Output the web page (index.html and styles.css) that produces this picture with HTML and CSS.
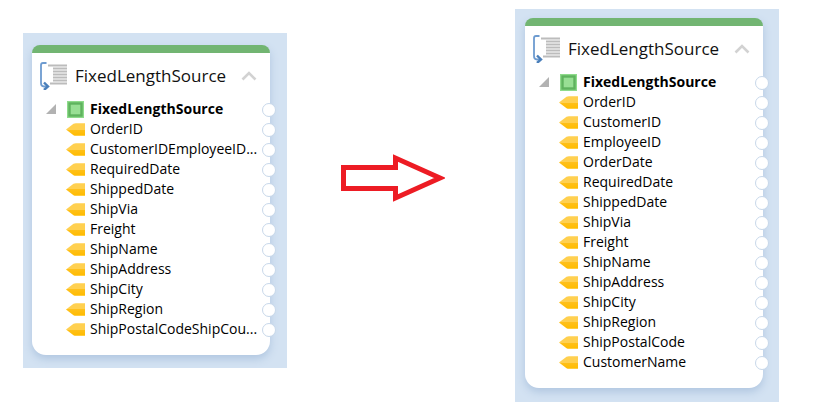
FILE: index.html
```
<!DOCTYPE html>
<html lang="en">
<head>
    <meta charset="UTF-8">
    <meta name="viewport" content="width=device-width, initial-scale=1.0">
    <title>FixedLengthSource</title>
    <link rel="stylesheet" href="styles.css">
</head>
<body>
    <!-- Shared icons -->
    <svg class="sprite" aria-hidden="true">
        <defs>
            <linearGradient id="tag-fill" x1="0" y1="0" x2="0" y2="1">
                <stop offset="0" stop-color="#ffd050"/>
                <stop offset="0.5" stop-color="#ffd050"/>
                <stop offset="0.5" stop-color="#ffc01a"/>
                <stop offset="1" stop-color="#ffbc00"/>
            </linearGradient>
        </defs>
        <symbol id="icon-source" viewBox="0 0 30 28">
            <path d="M7.500 1H4Q2 1 2 3V21Q2 24.500 5 24.500H8" fill="none" stroke="#6d9bd0" stroke-width="1.800"/>
            <path d="M5 20.500L9 24.500L5 28" fill="none" stroke="#4a7fba" stroke-width="2.400"/>
            <path d="M9 3.500H28M14 6.500H28M14 9.500H28M14 12.500H28M14 15.500H28M14 18.500H28M11 21.500H28" stroke="#bcbcbc" stroke-width="1.800"/>
        </symbol>
        <symbol id="icon-chevron" viewBox="0 0 16 10">
            <path d="M1.500 8.500L8 2L14.500 8.500" fill="none" stroke="#d2d2d2" stroke-width="2.600"/>
        </symbol>
        <symbol id="icon-expanded" viewBox="0 0 10 10">
            <path d="M10 0V10H0Z" fill="#b2b2b2"/>
        </symbol>
        <symbol id="icon-root" viewBox="0 0 17 17">
            <rect width="17" height="17" fill="#8edb8b"/>
            <rect x="2.500" y="2.500" width="12" height="12" fill="#98df94" stroke="#5fb35e" stroke-width="2.400"/>
        </symbol>
        <symbol id="icon-field" viewBox="0 0 19 13">
            <path d="M0 6.500L7.500 0.800Q8.500 0.300 10 0.300H19V12.700H10Q8.500 12.700 7.500 12.200Z" fill="url(#tag-fill)"/>
        </symbol>
    </svg>

    <main class="comparison">
        <section class="canvas canvas-before">
            <article class="node">
                <header class="node-header">
                    <svg class="source-icon"><use href="#icon-source"/></svg>
                    <h2>FixedLengthSource</h2>
                    <button class="collapse" aria-label="Collapse"><svg><use href="#icon-chevron"/></svg></button>
                </header>
                <ul class="fields">
                    <li class="root">
                        <button class="toggle" aria-label="Toggle fields"><svg><use href="#icon-expanded"/></svg></button>
                        <svg class="root-icon"><use href="#icon-root"/></svg>
                        <span>FixedLengthSource</span>
                    </li>
                    <li><svg><use href="#icon-field"/></svg><span>OrderID</span></li>
                    <li><svg><use href="#icon-field"/></svg><span>CustomerIDEmployeeID...</span></li>
                    <li><svg><use href="#icon-field"/></svg><span>RequiredDate</span></li>
                    <li><svg><use href="#icon-field"/></svg><span>ShippedDate</span></li>
                    <li><svg><use href="#icon-field"/></svg><span>ShipVia</span></li>
                    <li><svg><use href="#icon-field"/></svg><span>Freight</span></li>
                    <li><svg><use href="#icon-field"/></svg><span>ShipName</span></li>
                    <li><svg><use href="#icon-field"/></svg><span>ShipAddress</span></li>
                    <li><svg><use href="#icon-field"/></svg><span>ShipCity</span></li>
                    <li><svg><use href="#icon-field"/></svg><span>ShipRegion</span></li>
                    <li><svg><use href="#icon-field"/></svg><span>ShipPostalCodeShipCou...</span></li>
                </ul>
            </article>
        </section>

        <div class="arrow">
            <svg viewBox="0 0 104 48" role="img" aria-label="becomes">
                <path d="M2.500 13.500H54.500V4L99 24L54.500 44V34.500H2.500Z" fill="#fff" stroke="#ed1c24" stroke-width="5"/>
            </svg>
        </div>

        <section class="canvas canvas-after">
            <article class="node">
                <header class="node-header">
                    <svg class="source-icon"><use href="#icon-source"/></svg>
                    <h2>FixedLengthSource</h2>
                    <button class="collapse" aria-label="Collapse"><svg><use href="#icon-chevron"/></svg></button>
                </header>
                <ul class="fields">
                    <li class="root">
                        <button class="toggle" aria-label="Toggle fields"><svg><use href="#icon-expanded"/></svg></button>
                        <svg class="root-icon"><use href="#icon-root"/></svg>
                        <span>FixedLengthSource</span>
                    </li>
                    <li><svg><use href="#icon-field"/></svg><span>OrderID</span></li>
                    <li><svg><use href="#icon-field"/></svg><span>CustomerID</span></li>
                    <li><svg><use href="#icon-field"/></svg><span>EmployeeID</span></li>
                    <li><svg><use href="#icon-field"/></svg><span>OrderDate</span></li>
                    <li><svg><use href="#icon-field"/></svg><span>RequiredDate</span></li>
                    <li><svg><use href="#icon-field"/></svg><span>ShippedDate</span></li>
                    <li><svg><use href="#icon-field"/></svg><span>ShipVia</span></li>
                    <li><svg><use href="#icon-field"/></svg><span>Freight</span></li>
                    <li><svg><use href="#icon-field"/></svg><span>ShipName</span></li>
                    <li><svg><use href="#icon-field"/></svg><span>ShipAddress</span></li>
                    <li><svg><use href="#icon-field"/></svg><span>ShipCity</span></li>
                    <li><svg><use href="#icon-field"/></svg><span>ShipRegion</span></li>
                    <li><svg><use href="#icon-field"/></svg><span>ShipPostalCode</span></li>
                    <li><svg><use href="#icon-field"/></svg><span>CustomerName</span></li>
                </ul>
            </article>
        </section>
    </main>
</body>
</html>
```
FILE: styles.css
```
* {
    box-sizing: border-box;
}
body {
    margin: 0;
    font-family: "Segoe UI", "Open Sans", "Noto Sans", sans-serif;
    font-size: 14px;
    line-height: 20px;
    color: #000;
    background-color: #fff;
}
svg {
    display: block;
    flex: none;
}
button {
    padding: 0;
    border: none;
    background: none;
    cursor: pointer;
}
.sprite {
    position: absolute;
    width: 0;
    height: 0;
}
.comparison {
    display: flex;
    align-items: flex-start;
    padding: 9px 36px 12px 23px;
}
.canvas {
    flex: 0 1 264px;
    min-width: 0;
    padding: 9px 16px 14px 10px;
    background-color: #d3e2f2;
}
.canvas-before {
    margin-top: 24px;
    padding: 12px 17px 13px 9px;
}
.node {
    border-top: 8px solid #72b572;
    border-radius: 8px 8px 14px 14px;
    padding-bottom: 16px;
    background-color: #fff;
    box-shadow: 0 4px 8px #b0c6e0;
}
.node-header {
    display: flex;
    align-items: center;
    height: 46px;
    padding: 0 13px 0 7px;
}
.node-header h2 {
    flex: 1;
    margin: 0 0 0 6px;
    font-size: 17px;
    font-weight: 400;
    color: #111;
}
.source-icon {
    width: 30px;
    height: 28px;
}
.collapse svg {
    width: 16px;
    height: 10px;
}
.fields {
    margin: 0;
    padding: 0;
    list-style: none;
}
.fields li {
    position: relative;
    display: flex;
    align-items: center;
    gap: 5px;
    height: 20px;
    padding-left: 34px;
    white-space: nowrap;
}
.fields li svg {
    width: 19px;
    height: 13px;
}
/* Connection port on the node edge */
.fields li::after {
    content: "";
    position: absolute;
    top: 4px;
    right: -6px;
    width: 12px;
    height: 12px;
    border: 1px solid #c8d8ea;
    border-radius: 50%;
    background-color: #fff;
}
.fields .root {
    gap: 6px;
    padding-left: 14px;
    font-weight: 700;
}
.fields .toggle {
    margin-right: 5px;
}
.fields .toggle svg {
    width: 10px;
    height: 10px;
}
.fields .root-icon {
    width: 17px;
    height: 17px;
}
.arrow {
    flex: 1;
    margin-top: 145px;
    padding-right: 16px;
}
.arrow svg {
    width: 104px;
    height: 48px;
    margin: 0 auto;
}
```
